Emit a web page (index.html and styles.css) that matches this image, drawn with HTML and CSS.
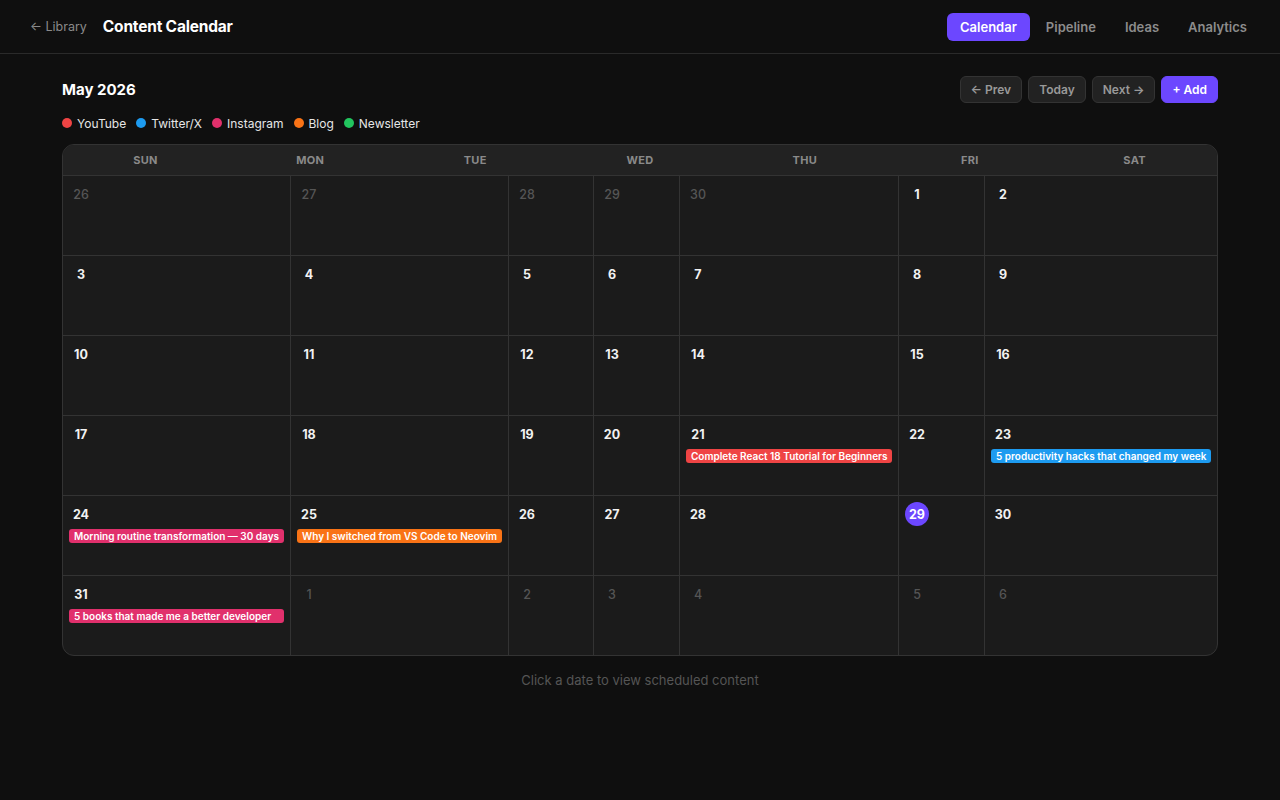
FILE: index.html
```html
<!DOCTYPE html>
<html lang="en">
<head>
    <meta charset="UTF-8">
    <meta name="viewport" content="width=device-width, initial-scale=1.0">
    <title>Content Calendar</title>
    <link rel="stylesheet" href="styles.css">
</head>
<body>
    <header class="topbar">
        <div class="topbar-left">
            <a class="back-link" href="#">&larr; Library</a>
            <h1 class="page-title">Content Calendar</h1>
        </div>
        <nav class="tabs">
            <a class="tab active" href="#">Calendar</a>
            <a class="tab" href="#">Pipeline</a>
            <a class="tab" href="#">Ideas</a>
            <a class="tab" href="#">Analytics</a>
        </nav>
    </header>

    <main class="main">
        <div class="month-row">
            <h2 class="month-title">May 2026</h2>
            <div class="month-actions">
                <button class="btn">&larr; Prev</button>
                <button class="btn">Today</button>
                <button class="btn">Next &rarr;</button>
                <button class="btn btn-primary">+ Add</button>
            </div>
        </div>

        <ul class="legend">
            <li><span class="dot youtube"></span>YouTube</li>
            <li><span class="dot twitter"></span>Twitter/X</li>
            <li><span class="dot instagram"></span>Instagram</li>
            <li><span class="dot blog"></span>Blog</li>
            <li><span class="dot newsletter"></span>Newsletter</li>
        </ul>

        <div class="calendar">
            <div class="weekdays">
                <div>Sun</div><div>Mon</div><div>Tue</div><div>Wed</div><div>Thu</div><div>Fri</div><div>Sat</div>
            </div>
            <div class="days" id="days"></div>
        </div>

        <p class="hint">Click a date to view scheduled content</p>
    </main>

    <script>
        const events = {
            21: { title: 'Complete React 18 Tutorial for Beginners', type: 'youtube' },
            23: { title: '5 productivity hacks that changed my week', type: 'twitter' },
            24: { title: 'Morning routine transformation \u2014 30 days', type: 'instagram' },
            25: { title: 'Why I switched from VS Code to Neovim', type: 'blog' },
            31: { title: '5 books that made me a better developer', type: 'instagram' }
        };

        const cells = [];
        [26, 27, 28, 29, 30].forEach(d => cells.push({ day: d, other: true }));
        for (let d = 1; d <= 31; d++) cells.push({ day: d });
        [1, 2, 3, 4, 5, 6].forEach(d => cells.push({ day: d, other: true }));

        const daysEl = document.getElementById('days');
        cells.forEach((c, i) => {
            const cell = document.createElement('div');
            cell.className = 'day';
            if (i % 7 === 6) cell.classList.add('last-col');
            if (i >= 35) cell.classList.add('last-row');

            const num = document.createElement('span');
            num.className = 'day-num';
            if (c.other) num.classList.add('other');
            if (!c.other && c.day === 29) num.classList.add('today');
            num.innerText = c.day;
            cell.appendChild(num);

            const ev = !c.other && events[c.day];
            if (ev) {
                const chip = document.createElement('div');
                chip.className = 'chip ' + ev.type;
                chip.innerText = ev.title;
                cell.appendChild(chip);
            }
            daysEl.appendChild(cell);
        });
    </script>
</body>
</html>
```

FILE: styles.css
```css
* {
    box-sizing: border-box;
}
body {
    margin: 0;
    font-family: 'Inter', 'Noto Sans', sans-serif;
    background: #0f0f0f;
    color: #eee;
}
a {
    text-decoration: none;
}
.topbar {
    height: 54px;
    display: flex;
    align-items: center;
    justify-content: space-between;
    padding: 0 20px;
    border-bottom: 1px solid #2a2a2a;
}
.topbar-left {
    display: flex;
    align-items: center;
    gap: 6px;
}
.back-link {
    color: #8a8a8a;
    font-size: 12.5px;
    padding: 6px 10px;
}
.page-title {
    margin: 0;
    font-size: 15.5px;
    font-weight: 700;
    color: #fff;
    letter-spacing: -0.2px;
}
.tabs {
    display: flex;
    gap: 3px;
    margin-top: 1px;
}
.tab {
    padding: 0 13px;
    height: 28px;
    line-height: 28px;
    border-radius: 6px;
    font-size: 13px;
    font-weight: 600;
    color: #8c8c8c;
}
.tab.active {
    background: #6c47ff;
    color: #fff;
}
.main {
    width: 1156px;
    margin: 0 auto;
    padding-top: 22px;
}
.month-row {
    display: flex;
    align-items: center;
    justify-content: space-between;
    height: 27px;
}
.month-title {
    margin: 0;
    font-size: 15px;
    font-weight: 700;
    color: #fff;
}
.month-actions {
    display: flex;
    gap: 6px;
}
.btn {
    height: 27px;
    padding: 0 10px;
    border: 1px solid #333;
    border-radius: 6px;
    background: #222;
    color: #999;
    font-family: inherit;
    font-size: 12px;
    font-weight: 600;
    cursor: pointer;
}
.btn-primary {
    background: #6c47ff;
    border-color: #6c47ff;
    color: #fff;
}
.legend {
    list-style: none;
    margin: 12px 0 13px;
    padding: 0;
    display: flex;
    gap: 10px;
    height: 16px;
}
.legend li {
    display: flex;
    align-items: center;
    gap: 5px;
    font-size: 12px;
    color: #e6e6e6;
}
.dot {
    width: 10px;
    height: 10px;
    border-radius: 50%;
}
.youtube { background: #ef4444; }
.twitter { background: #1d9bf0; }
.instagram { background: #e1306c; }
.blog { background: #f97316; }
.newsletter { background: #22c55e; }

.calendar {
    border: 1px solid #333;
    border-radius: 12px;
    overflow: hidden;
    background: #1b1b1b;
}
.weekdays {
    display: grid;
    grid-template-columns: repeat(7, 1fr);
    background: #222;
    border-bottom: 1px solid #333;
    height: 31px;
}
.weekdays div {
    text-align: center;
    line-height: 30px;
    font-size: 11px;
    font-weight: 700;
    color: #8a8a8a;
    text-transform: uppercase;
    letter-spacing: 0.3px;
}
.days {
    display: grid;
    grid-template-columns: 228px 218px 85px 86px 219px 86px 232px;
}
.day {
    height: 80px;
    padding: 6px;
    border-right: 1px solid #333;
    border-bottom: 1px solid #333;
    min-width: 0;
}
.day.last-col {
    border-right: none;
}
.day.last-row {
    height: 79px;
    border-bottom: none;
}
.day-num {
    display: flex;
    align-items: center;
    justify-content: center;
    width: 24px;
    height: 24px;
    border-radius: 50%;
    font-size: 12.5px;
    font-weight: 700;
    color: #f2f2f2;
}
.day-num.other {
    color: #555;
    font-weight: 500;
}
.day-num.today {
    background: #6c47ff;
    color: #fff;
}
.chip {
    margin-top: 3px;
    padding: 0 5px;
    height: 14px;
    line-height: 14px;
    border-radius: 3px;
    font-size: 10px;
    font-weight: 600;
    color: #fff;
    white-space: nowrap;
    overflow: hidden;
}
.hint {
    margin: 16px 0 0;
    text-align: center;
    font-size: 13px;
    color: #555;
}
```
